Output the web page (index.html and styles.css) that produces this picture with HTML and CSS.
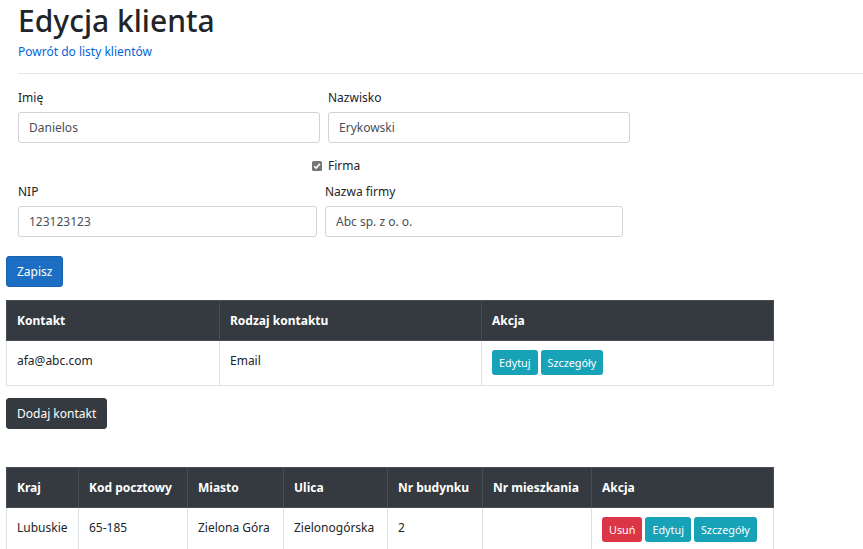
FILE: index.html
```html
<!DOCTYPE html>
<html lang="pl">
<head>
<meta charset="utf-8">
<title>Edycja klienta</title>
<link rel="stylesheet" href="styles.css">
</head>
<body>
<div class="page">
  <div class="top">
    <h1 class="title">Edycja klienta</h1>
    <a class="back" href="#">Powrót do listy klientów</a>
    <hr class="sep">
    <div class="form-row row1">
      <div class="field w302">
        <label class="lbl">Imię</label>
        <div class="input">Danielos</div>
      </div>
      <div class="field w302">
        <label class="lbl">Nazwisko</label>
        <div class="input">Erykowski</div>
      </div>
    </div>
    <div class="check-row">
      <span class="check"><svg width="10" height="10" viewBox="0 0 10 10"><rect x="0" y="0" width="10" height="10" rx="1.5" fill="#767676"/><path d="M2.2 5.2 L4.1 7.1 L7.9 2.9" stroke="#fff" stroke-width="1.6" fill="none"/></svg></span>
      <span class="check-label">Firma</span>
    </div>
    <div class="form-row row2">
      <div class="field w299">
        <label class="lbl">NIP</label>
        <div class="input">123123123</div>
      </div>
      <div class="field w298">
        <label class="lbl">Nazwa firmy</label>
        <div class="input">Abc sp. z o. o.</div>
      </div>
    </div>
  </div>
  <div class="btn btn-primary save">Zapisz</div>
  <table class="tbl t1">
    <thead>
      <tr><th class="c213">Kontakt</th><th class="c262">Rodzaj kontaktu</th><th>Akcja</th></tr>
    </thead>
    <tbody>
      <tr><td>afa@abc.com</td><td>Email</td><td class="act"><span class="btn btn-sm btn-info">Edytuj</span><span class="btn btn-sm btn-info">Szczegóły</span></td></tr>
    </tbody>
  </table>
  <div class="btn btn-dark add">Dodaj kontakt</div>
  <table class="tbl t2">
    <thead>
      <tr><th class="c72">Kraj</th><th class="c109">Kod pocztowy</th><th class="c96">Miasto</th><th class="c104">Ulica</th><th class="c95">Nr budynku</th><th class="c109">Nr mieszkania</th><th>Akcja</th></tr>
    </thead>
    <tbody>
      <tr><td>Lubuskie</td><td>65-185</td><td>Zielona Góra</td><td>Zielonogórska</td><td>2</td><td></td><td class="act"><span class="btn btn-sm btn-danger">Usuń</span><span class="btn btn-sm btn-info">Edytuj</span><span class="btn btn-sm btn-info">Szczegóły</span></td></tr>
    </tbody>
  </table>
</div>
</body>
</html>
```

FILE: styles.css
```css
* { box-sizing: border-box; }
html, body { margin: 0; padding: 0; background: #fff; }
body {
  font-family: "Noto Sans", "Open Sans", Arial, sans-serif;
  font-size: 12px;
  line-height: 19px;
  color: #212529;
  overflow: hidden;
}
.page { padding: 0 0 0 6px; }
.top { padding-left: 12px; }
.title {
  margin: 0;
  font-size: 30px;
  font-weight: 500;
  line-height: 41px;
}
.back {
  display: block;
  margin-top: 1px;
  color: #0366d6;
  text-decoration: none;
  height: 19px;
}
.sep {
  margin: 12px 0 0 0;
  border: 0;
  border-top: 1px solid #e3e3e3;
  height: 0;
}
.form-row { display: flex; gap: 8px; }
.row1 { margin-top: 14px; }
.row2 { margin-top: 7px; }
.field { display: flex; flex-direction: column; }
.w302 { width: 302px; }
.w299 { width: 299px; }
.w298 { width: 298px; }
.lbl { display: block; height: 19px; margin-bottom: 5px; }
.input {
  height: 31px;
  border: 1px solid #ced4da;
  border-radius: 3px;
  padding: 5px 10px;
  color: #495057;
  line-height: 19px;
}
.check-row {
  display: flex;
  align-items: center;
  margin-top: 13px;
  height: 19px;
  padding-left: 294px;
}
.check { width: 10px; height: 10px; display: block; line-height: 0; }
.check-label { margin-left: 6px; }
.btn {
  display: inline-block;
  border: 1px solid transparent;
  border-radius: 3px;
  color: #fff;
  text-align: center;
  white-space: nowrap;
  line-height: 19px;
  padding: 5px 10px;
}
.btn-primary { background: #1b6ec2; border-color: #1861ac; }
.btn-dark { background: #343a40; border-color: #343a40; }
.btn-info { background: #17a2b8; border-color: #17a2b8; }
.btn-danger { background: #dc3545; border-color: #dc3545; }
.btn-sm {
  font-size: 10.8px;
  line-height: 17px;
  padding: 3px 6px;
  border-radius: 2.5px;
  margin-right: 3px;
}
.save { margin-top: 19px; height: 31px; }
.add { margin-top: 12px; height: 31px; }
.tbl {
  border-collapse: collapse;
  width: 768px;
  table-layout: fixed;
}
.t1 { margin-top: 13px; }
.t2 { margin-top: 38px; }
.tbl th, .tbl td {
  text-align: left;
  padding: 10px 10px;
  vertical-align: top;
  border: 1px solid #dee2e6;
  white-space: nowrap;
}
.tbl th {
  background: #343a40;
  color: #fff;
  font-weight: 700;
  border-color: #454d55;
  height: 40px;
  vertical-align: middle;
}
.tbl td { height: 45px; }
.tbl td.act { padding-top: 9px; padding-bottom: 9px; }
.c213 { width: 213px; }
.c262 { width: 262px; }
.c72 { width: 72px; }
.c109 { width: 109px; }
.c96 { width: 96px; }
.c104 { width: 104px; }
.c95 { width: 95px; }
```
